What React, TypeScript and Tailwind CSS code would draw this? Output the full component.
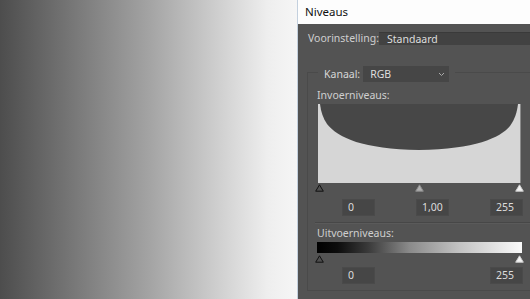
import React from "react";

function Tri({ kind }: { kind: "black" | "gray" | "white" }) {
  const fill = kind === "black" ? "#4f4f4f" : kind === "gray" ? "#b0b0b0" : "#f4f4f4";
  const stroke = kind === "black" ? "#111" : kind === "gray" ? "#8c8c8c" : "#d0d0d0";
  return (
    <svg width="9" height="8" viewBox="0 0 9 8" className="block">
      <path d="M4.5 0.8 L8.3 7.2 L0.7 7.2 Z" fill={fill} stroke={stroke} strokeWidth="1" strokeLinejoin="round" />
    </svg>
  );
}

function Box({ v }: { v: string }) {
  return (
    <div className="w-[33px] h-[17px] bg-[#464646] border border-[#4a4a4a] pl-[5px] flex items-center text-[#dcdcdc] text-[10.5px] leading-none">
      {v}
    </div>
  );
}

export default function App() {
  return (
    <div className="flex w-[530px] h-[299px] overflow-hidden font-['Noto_Sans',sans-serif] text-[10.5px]">
      <div className="w-[297px] h-full shrink-0 bg-[linear-gradient(to_right,#4d4d4d,#a3a3a3_50%,#eeeeee_90%,#f6f6f6)]" />
      <div className="w-px h-full shrink-0 bg-[#c3d0de]" />
      <div className="flex-1 min-w-0 flex flex-col bg-[#535353] overflow-hidden">
        <div className="h-[24px] shrink-0 bg-[#fdfdfd] pl-[7px] flex items-center text-[11.5px] text-[#111]">
          Niveaus
        </div>
        <div className="pl-[9px] w-[260px] flex flex-col">
          <div className="mt-[8px] h-[13px] flex items-center">
            <div className="w-[72px] shrink-0 pl-px text-[#cfcfcf] leading-none whitespace-nowrap">Voorinstelling:</div>
            <div className="flex-1 h-[13px] bg-[#424242] border-t border-[#3a3a3a] pl-[8px] flex items-center text-[#dedede] leading-none">
              Standaard
            </div>
          </div>
          <div className="mt-[27px] w-[260px] h-[219px] border border-[#4a4a4a] flex flex-col">
            <div className="-mt-[7px] ml-[10px] self-start flex items-center bg-[#535353] px-[6px] h-[16px]">
              <span className="text-[#d6d6d6] leading-none">Kanaal:</span>
              <div className="ml-[3px] w-[86px] h-[16px] bg-[#464646] pl-[7px] pr-[4px] flex items-center justify-between text-[#dedede] leading-none">
                <span>RGB</span>
                <svg width="7" height="5" viewBox="0 0 7 5">
                  <polyline points="1,1 3.5,3.5 6,1" fill="none" stroke="#aaa" strokeWidth="1" />
                </svg>
              </div>
            </div>
            <div className="mt-[7px] h-[13px] pl-[9px] text-[#cfcfcf] leading-[13px]">Invoerniveaus:</div>
            <div className="mt-[2px] ml-[10px] w-[203px] h-[79px] bg-[#d6d6d6]">
              <svg width="203" height="79" viewBox="0 0 203 79" className="block">
                <path
                  d="M2 0 C3 8 5 14 9 20 C20 34 45 45 101 46 C157 45 182 34 192 22 C197 15 199 8 200 0 Z"
                  fill="#474747"
                />
                <line x1="202.5" y1="0" x2="202.5" y2="79" stroke="#8a8a8a" strokeWidth="1" />
              </svg>
            </div>
            <div className="mt-[1px] ml-[7px] w-[209px] h-[8px] flex justify-between">
              <Tri kind="black" />
              <Tri kind="gray" />
              <Tri kind="white" />
            </div>
            <div className="mt-[7px] ml-[34px] flex gap-[41px]">
              <Box v="0" />
              <Box v="1,00" />
              <Box v="255" />
            </div>
            <div className="mt-[6px] ml-[7px] h-px bg-[#474747] border-b border-[#5a5a5a] box-content" />
            <div className="mt-[3px] h-[13px] pl-[9px] text-[#cfcfcf] leading-[13px]">Uitvoerniveaus:</div>
            <div className="mt-[2px] ml-[9px] w-[205px] h-[11px] bg-[linear-gradient(to_right,#000,#0c0c0c_10%,#3a3a3a_25%,#8a8a8a_45%,#c4c4c4_70%,#fafafa)]" />
            <div className="mt-[2px] ml-[7px] w-[209px] h-[8px] flex justify-between">
              <Tri kind="black" />
              <Tri kind="white" />
            </div>
            <div className="mt-[4px] ml-[34px] flex gap-[115px]">
              <Box v="0" />
              <Box v="255" />
            </div>
          </div>
        </div>
      </div>
    </div>
  );
}
